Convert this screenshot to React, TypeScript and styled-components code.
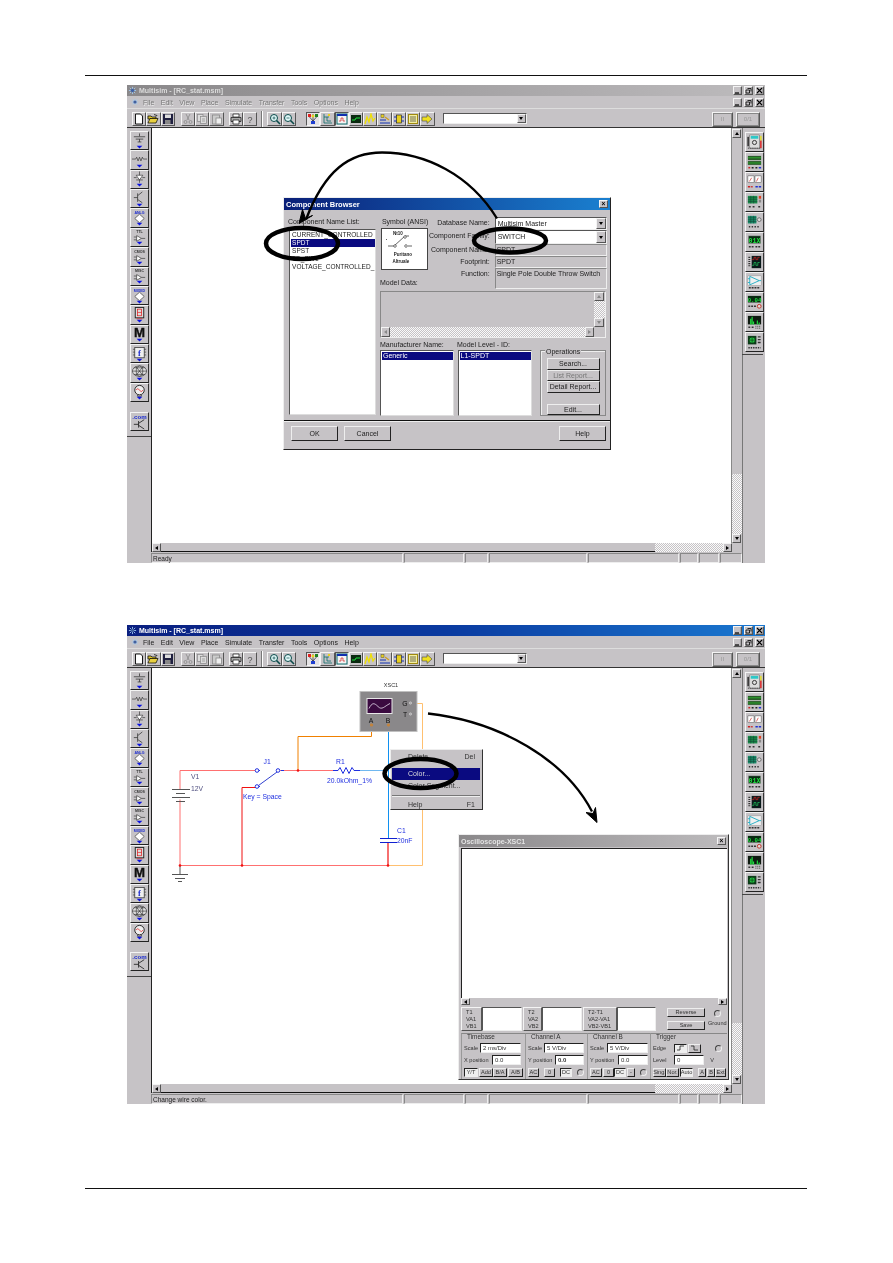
import React from 'react';
import styled, { createGlobalStyle, css } from 'styled-components';

const Global = createGlobalStyle`
  html, body { margin: 0; padding: 0; background: #fff; }
  body { font-family: 'Liberation Sans', Arial, sans-serif; }
`;

const chrome = '#c6c3c6';

const raised = css`
  background: ${chrome};
  border: 1px solid;
  border-color: #f4f4f4 #555 #555 #f4f4f4;
  box-sizing: border-box;
`;

const sunken = css`
  border: 1px solid;
  border-color: #555 #eee #eee #555;
  box-sizing: border-box;
`;

const checker = css`
  background: repeating-conic-gradient(#fafafa 0 25%, #c6c3c6 0 50%) 0 0 / 2px 2px;
`;

const Page = styled.div`
  width: 893px;
  min-height: 1263px;
  box-sizing: border-box;
  padding: 75px 86px 0 85px;
  display: flex;
  flex-direction: column;
  align-items: center;
`;

const Rule = styled.div<{ $top?: number }>`
  width: 100%;
  height: 1px;
  background: #111;
  margin-top: ${p => p.$top ?? 0}px;
`;

const Shell = styled.div<{ $top: number; $height: number }>`
  width: 638px;
  height: ${p => p.$height}px;
  margin-top: ${p => p.$top}px;
  background: ${chrome};
  display: flex;
  flex-direction: column;
  filter: blur(0.45px);
  overflow: hidden;
  flex: none;
`;

const TitleBar = styled.div<{ $active: boolean }>`
  height: 11px;
  flex: none;
  display: flex;
  align-items: center;
  gap: 2px;
  padding: 0 1px;
  background: ${p =>
    p.$active ? 'linear-gradient(90deg, #0a1f80 0%, #0a3aa0 50%, #1a78d0 100%)' : 'linear-gradient(90deg, #8a888a, #bdbbbd)'};
`;

const TitleText = styled.span<{ $active: boolean }>`
  font-size: 7px;
  font-weight: 700;
  color: ${p => (p.$active ? '#fff' : '#dcdcdc')};
  flex: 1;
  white-space: nowrap;
`;

const WinButtons = styled.div`
  display: flex;
  gap: 2px;
  margin-right: 0;
`;

const WinButton = styled.div`
  ${raised}
  width: 9px;
  height: 9px;
  font-size: 7px;
  line-height: 7px;
  text-align: center;
  font-weight: 700;
  color: #000;
  box-shadow: inset -0.5px -0.5px 0 #888;
  display: flex;
  align-items: center;
  justify-content: center;
  svg { display: block; }
`;

const MenuBar = styled.div`
  height: 12px;
  flex: none;
  display: flex;
  align-items: center;
  padding: 0 1px 0 4px;
`;

const MenuItems = styled.div`
  display: flex;
  gap: 6.5px;
  margin-left: 4px;
  flex: 1;
`;

const MenuLabel = styled.span<{ $active: boolean }>`
  font-size: 7px;
  color: ${p => (p.$active ? '#222' : '#777')};
  text-shadow: ${p => (p.$active ? 'none' : '0.5px 0.5px 0 #eee')};
`;

const Toolbar = styled.div`
  height: 20px;
  flex: none;
  box-sizing: border-box;
  display: flex;
  align-items: flex-start;
  padding: 3px 5px 0;
  border-top: 1px solid #ddd;
  border-bottom: 1px solid #333;
`;

const ToolGroup = styled.div<{ $ml?: number }>`
  display: flex;
  margin-left: ${p => p.$ml ?? 0}px;
`;

const ToolButton = styled.div<{ $pressed?: boolean }>`
  ${raised}
  width: 14.3px;
  height: 14px;
  display: flex;
  align-items: center;
  justify-content: center;
  ${p => p.$pressed && css`border-color: #555 #f4f4f4 #f4f4f4 #555; background: #e4e2e4;`}
  svg { display: block; }
`;

const ToolDivider = styled.div`
  width: 1px;
  height: 16px;
  margin: -1px 0 0 4px;
  background: #777;
  border-right: 1px solid #fff;
`;

const Combo = styled.div`
  ${sunken}
  width: 84px;
  height: 11px;
  margin: 1px 0 0 8px;
  background: #fff;
  display: flex;
  justify-content: flex-end;
`;

const DropArrow = styled.div<{ $size?: number }>`
  ${raised}
  width: ${p => p.$size ?? 9}px;
  height: 100%;
  flex: none;
  display: flex;
  align-items: center;
  justify-content: center;
  &::after {
    content: '';
    border: 2px solid transparent;
    border-top: 3px solid #000;
    border-bottom: 0;
  }
`;

const RunButtons = styled.div`
  display: flex;
  gap: 3px;
  margin-left: auto;
  margin-right: 0;
`;

const RunButton = styled.div<{ $w: number }>`
  ${raised}
  width: ${p => p.$w}px;
  height: 15px;
  outline: 1px solid #888;
  outline-offset: -2px;
  font-size: 6px;
  color: #999;
  text-align: center;
  line-height: 12px;
`;

const Body = styled.div`
  flex: 1;
  min-height: 0;
  display: flex;
`;

const LeftDock = styled.div`
  width: 24px;
  flex: none;
  display: flex;
  flex-direction: column;
  box-sizing: border-box;
  padding: 3px 0 0 3px;
`;

const RightDock = styled.div`
  width: 23px;
  flex: none;
  box-sizing: border-box;
  padding: 4px 2px 0 2px;
  border-left: 1px solid #777;
`;

const DockStack = styled.div<{ $pitch: number }>`
  display: grid;
  grid-auto-rows: ${p => p.$pitch}px;
`;

const DockButton = styled.div`
  ${raised}
  width: 19px;
  border-bottom-color: #222;
  border-right-color: #333;
  display: flex;
  align-items: center;
  justify-content: center;
  svg { display: block; }
`;

const ComBlock = styled.div`
  margin-top: 10px;
  padding-bottom: 3px;
  height: 19px;
  display: flex;
`;

const DockFoot = styled.div`
  margin: 2px 0 0 -3px;
  border-top: 1px solid #444;
`;

const Center = styled.div`
  flex: 1;
  min-width: 0;
  display: flex;
  flex-direction: column;
`;

const WorkRow = styled.div`
  flex: 1;
  min-height: 0;
  display: flex;
`;

const Canvas = styled.div`
  position: relative;
  flex: 1;
  background: #fff;
  border-left: 1px solid #222;
  overflow: hidden;
`;

const CanvasSvg = styled.svg`
  position: absolute;
  inset: 0;
  width: 100%;
  height: 100%;
  display: block;
`;

const VScroll = styled.div`
  width: 11px;
  flex: none;
  display: flex;
  flex-direction: column;
  background: ${chrome};
  border-left: 1px solid #888;
  box-sizing: border-box;
  padding-top: 1px;
`;

const VThumb = styled.div`
  flex: 1;
`;

const VTrack = styled.div<{ $h: number }>`
  ${checker}
  height: ${p => p.$h}px;
`;

const Arrow = styled.div<{ $dir: 'up' | 'down' | 'left' | 'right'; $w?: number; $h?: number; $dim?: boolean }>`
  ${raised}
  width: ${p => p.$w ?? 9}px;
  height: ${p => p.$h ?? 9}px;
  flex: none;
  display: flex;
  align-items: center;
  justify-content: center;
  &::after {
    content: '';
    width: 0;
    height: 0;
    border-style: solid;
    border-color: transparent;
    ${p => p.$dir === 'up' && css`border-width: 0 2.5px 3px; border-bottom-color: ${p.$dim ? '#888' : '#000'};`}
    ${p => p.$dir === 'down' && css`border-width: 3px 2.5px 0; border-top-color: ${p.$dim ? '#888' : '#000'};`}
    ${p => p.$dir === 'left' && css`border-width: 2.5px 3px 2.5px 0; border-right-color: ${p.$dim ? '#888' : '#000'};`}
    ${p => p.$dir === 'right' && css`border-width: 2.5px 0 2.5px 3px; border-left-color: ${p.$dim ? '#888' : '#000'};`}
  }
`;

const HScroll = styled.div`
  height: 9px;
  flex: none;
  display: flex;
  border-left: 1px solid #222;
  box-shadow: none;
`;

const HScrollInner = styled.div`
  flex: 1;
  display: flex;
  margin-right: 10px;
`;

const HThumb = styled.div`
  flex: 1;
  background: ${chrome};
  border-bottom: 1px solid #111;
`;

const HTrack = styled.div`
  ${checker}
  width: 68px;
  flex: none;
`;

const StatusBar = styled.div`
  height: 11px;
  flex: none;
  display: flex;
  padding-top: 1px;
  box-sizing: border-box;
`;

const StatusCell = styled.div<{ $w: number; $grow?: boolean }>`
  ${sunken}
  border-color: #888 #eee #eee #888;
  width: ${p => p.$w}px;
  margin-left: ${p => (p.$grow ? 0 : 1)}px;
  font-size: 6.5px;
  line-height: 9px;
  padding-left: 1px;
  color: #222;
  white-space: nowrap;
`;

/* ----- Component Browser dialog ----- */

const Dialog = styled.div`
  ${raised}
  position: absolute;
  left: 131px;
  top: 69px;
  width: 328px;
  height: 253px;
  border-color: #eee #222 #222 #eee;
  display: flex;
  flex-direction: column;
  font-size: 7px;
  color: #222;
`;

const DialogTitle = styled.div`
  height: 12px;
  flex: none;
  display: flex;
  align-items: center;
  justify-content: space-between;
  padding: 0 2px;
  margin-bottom: 7px;
  background: linear-gradient(90deg, #0a1f78, #1a80d0);
  color: #fff;
  font-weight: 700;
  font-size: 7.5px;
`;

const CloseBox = styled.div`
  ${raised}
  width: 9px;
  height: 8px;
  color: #000;
  font-size: 6.5px;
  line-height: 6px;
  text-align: center;
  font-weight: 700;
`;

const DialogMain = styled.div`
  display: flex;
  padding: 0 4px 0 4px;
  height: 198px;
`;

const NameColumn = styled.div`
  width: 92px;
  flex: none;
  display: flex;
  flex-direction: column;
`;

const FieldLabel = styled.div`
  height: 12px;
  line-height: 10px;
  white-space: nowrap;
`;

const ListBox = styled.div<{ $w?: number; $h?: number }>`
  ${sunken}
  background: #fff;
  border-color: #555 #ddd #ddd #555;
  width: ${p => (p.$w ? `${p.$w}px` : 'auto')};
  height: ${p => (p.$h ? `${p.$h}px` : 'auto')};
  overflow: hidden;
  flex: none;
  padding: 1px 0 0 1px;
`;

const NameList = styled(ListBox)`
  width: 87px;
  margin-left: 1px;
  height: 186px;
  font-size: 6.5px;
  letter-spacing: 0.05px;
`;

const ListRow = styled.div<{ $selected?: boolean; $size?: number }>`
  height: 8px;
  line-height: 8px;
  white-space: nowrap;
  padding-left: 1px;
  background: ${p => (p.$selected ? '#0a0a80' : 'transparent')};
  color: ${p => (p.$selected ? '#fff' : '#222')};
`;

const RightColumn = styled.div`
  flex: 1;
  min-width: 0;
  display: flex;
  flex-direction: column;
`;

const TopRow = styled.div`
  display: flex;
  height: 73px;
  flex: none;
`;

const SymbolColumn = styled.div`
  width: 49px;
  flex: none;
  display: flex;
  flex-direction: column;
`;

const SymbolBox = styled.div`
  width: 47px;
  height: 42px;
  margin: -1px 0 0 1px;
  background: #fff;
  border: 1px solid #444;
  box-sizing: border-box;
  svg { display: block; }
`;

const ModelDataLabel = styled(FieldLabel)`
  margin-top: 8px;
`;

const FieldGrid = styled.div`
  flex: 1;
  display: grid;
  grid-template-columns: 1fr 112px;
  grid-template-rows: 13px 14px 12px 12px 21px;
  column-gap: 5px;
`;

const RowLabel = styled.div`
  text-align: right;
  padding-top: 2px;
  white-space: nowrap;
  overflow: visible;
`;

const ComboField = styled.div`
  ${sunken}
  background: #fff;
  display: flex;
  justify-content: space-between;
  padding-left: 2px;
  line-height: 11px;
  color: #222;
`;

const ReadField = styled.div`
  border: 1px solid #888;
  border-right-color: #eee;
  border-bottom-color: #eee;
  box-sizing: border-box;
  padding-left: 1px;
  line-height: 10px;
`;

const ModelBox = styled.div`
  ${sunken}
  height: 47px;
  margin-top: 1px;
  display: grid;
  grid-template-columns: 1fr 11px;
  grid-template-rows: 1fr 10px;
  flex: none;
  border-color: #888 #eee #eee #888;
`;

const ModelVScroll = styled.div`
  display: flex;
  flex-direction: column;
`;

const ModelTrack = styled.div`
  ${checker}
  flex: 1;
`;

const ModelPad = styled.div`
  flex: none;
  height: 10px;
  background: ${chrome};
`;

const ModelHScroll = styled.div`
  display: flex;
  grid-column: 1;
`;

const LowerLabels = styled.div`
  display: flex;
  height: 11px;
  margin-top: 1px;
  flex: none;
`;

const LowerLabel = styled.div<{ $w: number }>`
  width: ${p => p.$w}px;
  line-height: 11px;
`;

const LowerRow = styled.div`
  display: flex;
  height: 66px;
  gap: 3.5px;
  flex: none;
`;

const Selected = styled(ListRow)`
  height: 8px;
  font-size: 7px;
`;

const Operations = styled.div`
  flex: 1;
  position: relative;
  margin: 0 0 0 5px;
  border: 1px solid #888;
  box-shadow: inset 1px 1px 0 #eee;
  display: flex;
  flex-direction: column;
  align-items: center;
  padding-top: 7px;
`;

const Legend = styled.span`
  position: absolute;
  left: 4px;
  top: -3px;
  padding: 0 1px;
  background: ${chrome};
  line-height: 8px;
`;

const PushButton = styled.div<{ $w?: number; $h?: number; $dim?: boolean; $after?: number }>`
  ${raised}
  width: ${p => p.$w ?? 53}px;
  height: ${p => p.$h ?? 11.5}px;
  margin-bottom: ${p => p.$after ?? 0}px;
  flex: none;
  border-color: #eee #222 #222 #eee;
  text-align: center;
  line-height: ${p => (p.$h ?? 11.5) - 2}px;
  color: ${p => (p.$dim ? '#777' : '#222')};
  white-space: nowrap;
`;

const DialogFooter = styled.div`
  flex: 1;
  display: flex;
  align-items: flex-start;
  margin-top: 5px;
  border-top: 1px solid #111;
  box-shadow: inset 0 1px 0 #eee;
  padding: 5px 4px 0 7px;
  gap: 6px;
`;

const FooterSpacer = styled.div`
  flex: 1;
`;

/* ----- context menu ----- */

const ContextMenu = styled.div`
  ${raised}
  position: absolute;
  left: 238px;
  top: 81px;
  width: 93px;
  height: 61px;
  padding: 1px 2px 0 1px;
  border-color: #eee #333 #333 #eee;
  font-size: 7px;
  color: #333;
`;

const ContextItem = styled.div<{ $selected?: boolean; $after?: number }>`
  height: 12px;
  line-height: 12px;
  display: flex;
  justify-content: space-between;
  padding: 0 5px 0 16px;
  margin-bottom: ${p => p.$after ?? 0}px;
  background: ${p => (p.$selected ? '#0a0a80' : 'transparent')};
  color: ${p => (p.$selected ? '#ddd' : '#333')};
`;

const ContextRule = styled.div`
  height: 1px;
  margin: 3px 0 2px;
  background: #777;
  border-bottom: 1px solid #eee;
`;

/* ----- oscilloscope panel ----- */

const ScopeWindow = styled.div`
  ${raised}
  position: absolute;
  left: 306px;
  top: 166px;
  width: 271px;
  height: 246px;
  display: flex;
  flex-direction: column;
  border-color: #eee #333 #333 #eee;
  font-size: 5.6px;
  color: #333;
`;

const ScopeTitle = styled.div`
  height: 12px;
  flex: none;
  display: flex;
  align-items: center;
  justify-content: space-between;
  padding: 0 2px;
  background: linear-gradient(90deg, #8a888a, #bdbbbd);
  color: #e4e4e4;
  font-weight: 700;
  font-size: 7px;
`;

const ScopeScreen = styled.div`
  height: 149px;
  margin: 1px 1px 0 2px;
  background: #fff;
  border-top: 1px solid #222;
  border-left: 1px solid #222;
  flex: none;
`;

const ScopeHScroll = styled.div`
  display: flex;
  height: 7px;
  margin: 0 1px 0 2px;
  flex: none;
`;

const ScopeThumb = styled.div`
  flex: 1;
`;

const ReadoutRow = styled.div`
  display: flex;
  height: 24px;
  margin: 2px 0 0 2px;
  flex: none;
`;

const ReadoutLabel = styled.div<{ $w: number }>`
  ${raised}
  width: ${p => p.$w}px;
  padding-left: 4px;
  line-height: 7px;
  padding-top: 1px;
  flex: none;
  white-space: nowrap;
`;

const ReadoutValue = styled.div<{ $w: number }>`
  ${sunken}
  width: ${p => p.$w}px;
  margin-right: 1px;
  background: #fff;
  flex: none;
`;

const ActionColumn = styled.div`
  display: flex;
  flex-direction: column;
  gap: 4px;
  margin: 1px 0 0 10px;
`;

const GroundColumn = styled.div`
  margin-left: 3px;
  display: flex;
  flex-direction: column;
  align-items: center;
  gap: 3px;
  padding-top: 3px;
`;

const Radio = styled.div<{ $ml?: number }>`
  width: 7px;
  height: 7px;
  border-radius: 50%;
  border: 1px solid;
  border-color: #444 #eee #eee #444;
  box-sizing: border-box;
  flex: none;
  margin-left: ${p => p.$ml ?? 0}px;
`;

const ControlsRow = styled.div`
  display: flex;
  flex: 1;
  margin: 2px 0 0 2px;
`;

const ControlGroup = styled.div<{ $w: number }>`
  width: ${p => p.$w}px;
  flex: none;
  position: relative;
  box-sizing: border-box;
  border-top: 1px solid #888;
  border-left: 1px solid #999;
  padding: 9px 2px 0 2px;
  display: flex;
  flex-direction: column;
  gap: 2px;
`;

const GroupTitle = styled.span`
  position: absolute;
  top: -1px;
  left: 5px;
  font-size: 6.4px;
  line-height: 8px;
`;

const ControlRow = styled.div`
  display: flex;
  align-items: center;
  height: 10px;
  white-space: nowrap;
`;

const ControlLabel = styled.span<{ $w: number; $center?: boolean }>`
  width: ${p => p.$w}px;
  flex: none;
  text-align: ${p => (p.$center ? 'center' : 'left')};
`;

const Input = styled.div<{ $w: number; $ml?: number; $plain?: boolean }>`
  ${sunken}
  border-color: #222 #eee #eee #222;
  width: ${p => p.$w}px;
  margin-left: ${p => p.$ml ?? 0}px;
  height: 10px;
  line-height: 8px;
  padding-left: 2px;
  background: #fff;
  flex: none;
  font-size: 6px;
`;

const MiniButton = styled.div<{ $w: number; $ml?: number; $on?: boolean }>`
  ${raised}
  border-color: #eee #222 #222 #eee;
  width: ${p => p.$w}px;
  margin-left: ${p => p.$ml ?? 0}px;
  height: 9px;
  flex: none;
  text-align: center;
  line-height: 7px;
  display: flex;
  align-items: center;
  justify-content: center;
  ${p => p.$on && css`background: #eeeeee; border-color: #222 #eee #eee #222;`}
`;

/* ----- small drawings ----- */

const Tri = () => <polygon points="6,14 12,14 9,17" fill="#0a10e0" />;

const gate = <path d="M6 7.5v6l5-3zM3 9h3M3 12h3M11 10.5h4" fill="#fff" stroke="#333" strokeWidth=".7" />;

const Label = ({ t, c = '#333' }: { t: string; c?: string }) => (
  <text x="9" y="4.4" fontSize="3.8" fontWeight="700" textAnchor="middle" fill={c} fontFamily="Liberation Sans">
    {t}
  </text>
);

const leftIcons: React.ReactNode[] = [
  <g key="g" stroke="#333" fill="none" strokeWidth=".8"><path d="M9 1v3M3 4.500h12M5 7h8M9 7v3M7 10h4" /><g stroke="none"><Tri /></g></g>,
  <g key="r" stroke="#333" fill="none" strokeWidth=".7"><path d="M1 8h4l1-2 1.500 4L9 6l1.500 4L12 6l1 2h4" /><g stroke="none"><Tri /></g></g>,
  <g key="d" stroke="#333" fill="#fff" strokeWidth=".7"><path d="M9 1v4M5.500 5h7L9 10zM5.500 10h7M9 10v3M3 7.500h3M12 7.500h3" /><g stroke="none"><Tri /></g></g>,
  <g key="t" stroke="#333" fill="none" strokeWidth=".8"><path d="M7 3v9M3 7.500h4M7 5.500l5-4M7 9.500l5 3.500" /><g stroke="none"><Tri /></g></g>,
  <g key="a"><Label t="ANLG" c="#1a2ad0" /><path d="M9 5l5 4.500-5 4.500-5-4.500z" fill="#fff" stroke="#333" strokeWidth=".7" /><Tri /></g>,
  <g key="ttl"><Label t="TTL" />{gate}<Tri /></g>,
  <g key="cmos"><Label t="CMOS" />{gate}<Tri /></g>,
  <g key="misc"><Label t="MISC" />{gate}<Tri /></g>,
  <g key="mix"><Label t="MIXED" c="#1a2ad0" /><path d="M9 5l5 4.500-5 4.500-5-4.500z" fill="#fff" stroke="#333" strokeWidth=".7" /><Tri /></g>,
  <g key="ind"><rect x="4.500" y="1" width="9" height="11" fill="#ddd" stroke="#222" /><rect x="6.800" y="2.800" width="4.400" height="7" fill="none" stroke="#e02020" strokeWidth=".8" /><path d="M6.800 6.300h4.400M6 13h6" stroke="#e02020" strokeWidth=".7" /><Tri /></g>,
  <g key="m"><text x="9" y="12.500" fontSize="14" fontWeight="900" textAnchor="middle" fill="#111" stroke="#111" strokeWidth=".4" fontFamily="Liberation Sans">M</text><Tri /></g>,
  <g key="f"><rect x="4" y="2" width="10" height="11" fill="#eee" stroke="#333" strokeWidth=".8" /><path d="M2 4h2M2 7h2M2 10h2M14 4h2M14 7h2M14 10h2" stroke="#333" strokeWidth=".7" /><text x="9" y="11" fontSize="9" fontWeight="700" textAnchor="middle" fill="#1a2ad0" fontFamily="Liberation Serif">f</text><Tri /></g>,
  <g key="rf" fill="none" stroke="#222" strokeWidth=".6"><ellipse cx="9" cy="7" rx="7.500" ry="5.500" fill="#ddd" /><ellipse cx="9" cy="7" rx="3.500" ry="5.500" /><path d="M1.500 7h15M3 3.500h12M3 10.500h12M5 2l8 10M13 2L5 12" /><g stroke="none"><Tri /></g></g>,
  <g key="wave" fill="none"><circle cx="9" cy="7" r="5" fill="#eee" stroke="#222" /><path d="M5.500 7c1-2 2-2 3.500 0s2.500 2 3.500 0" stroke="#e02020" strokeWidth=".8" /><path d="M7 12v1.500h4V12" stroke="#222" strokeWidth=".7" /><g stroke="none"><Tri /></g></g>,
];

const rightIcons: React.ReactNode[] = [
  <g key="0"><rect x="4" y="1" width="10" height="14" fill="#ddd" stroke="#555" strokeWidth=".5" /><rect x="5" y="2" width="8" height="3" fill="#2cc8c8" /><circle cx="9" cy="9" r="2.200" fill="none" stroke="#333" /><rect x="1.500" y="3" width="1.500" height="10" fill="#222" /><rect x="15" y="2" width="1.500" height="5" fill="#e8e020" /><rect x="15" y="7" width="1.500" height="8" fill="#e02020" /><path d="M2 15h14" stroke="#222" strokeDasharray="1 1" /></g>,
  <g key="1"><rect x="2" y="2" width="14" height="4.500" fill="#2a5a2a" /><rect x="2" y="7.500" width="14" height="4" fill="#2a5a2a" /><path d="M2 4h14M2 9.500h14" stroke="#30e030" strokeWidth=".6" /><path d="M2.500 14.500h2" stroke="#d02020" strokeWidth="1.600" /><path d="M6 14.500h2M10 14.500h2" stroke="#222" strokeWidth="1.600" /><path d="M13.500 14.500h2.500" stroke="#2030d0" strokeWidth="1.600" /></g>,
  <g key="2"><rect x="2" y="2" width="6.500" height="7" fill="#fff" stroke="#444" strokeWidth=".5" /><rect x="9.500" y="2" width="6.500" height="7" fill="#fff" stroke="#444" strokeWidth=".5" /><path d="M3.500 8L6 4M11 8l2-4" stroke="#d02020" strokeWidth=".7" /><path d="M2 13.500h2.500M5.500 13.500H7" stroke="#d02020" strokeWidth="1.600" /><path d="M10 13.500h2.500M13.500 13.500H16" stroke="#2030d0" strokeWidth="1.600" /></g>,
  <g key="3"><rect x="2" y="2" width="10" height="8" fill="#1a8a4a" /><path d="M2 4h10M2 6h10M2 8h10M5 2v8M8 2v8" stroke="#104030" strokeWidth=".5" /><rect x="13.500" y="2" width="2.500" height="3" fill="#e04020" /><rect x="13.500" y="6" width="2.500" height="3" fill="#888" /><path d="M3 13.500h2M7 13.500h2M13 13.500h2" stroke="#333" strokeWidth="1.600" /></g>,
  <g key="4"><rect x="2" y="2" width="9" height="8" fill="#1a8a6a" /><path d="M2 4h9M2 6h9M2 8h9M5 2v8M8 2v8" stroke="#104030" strokeWidth=".5" /><circle cx="14" cy="6" r="2" fill="#ddd" stroke="#333" strokeWidth=".6" /><path d="M3 13.500h1.500M6 13.500h1.500M9 13.500h1.500M12 13.500h1.500" stroke="#333" strokeWidth="1.600" /></g>,
  <g key="5"><rect x="2.500" y="2" width="13" height="8" fill="#082a10" stroke="#999" strokeWidth=".5" /><text x="9" y="9" fontSize="7" fontWeight="700" textAnchor="middle" fill="#20e040" fontFamily="Liberation Mono">01X</text><path d="M3 13.500h2M6 13.500h2M10 13.500h2M13 13.500h2" stroke="#333" strokeWidth="1.600" /></g>,
  <g key="6"><rect x="6" y="2" width="10" height="13" fill="#0a1a1a" /><path d="M6.500 6h2V3.500h2V6h2V3.500h2" stroke="#e02020" fill="none" strokeWidth=".7" /><path d="M6.500 12h2V9h2v3h2V9h2" stroke="#20d060" fill="none" strokeWidth=".7" /><path d="M3.500 3v11" stroke="#333" strokeWidth="2" strokeDasharray="1.200 1" /></g>,
  <g key="7"><rect x="2" y="2" width="14" height="10" fill="#f0f0f0" stroke="#888" strokeWidth=".4" /><path d="M4 2.500v9L14 7zM2 5h2M2 9h2M14 7h2" fill="none" stroke="#10a8c0" strokeWidth=".9" /><path d="M3 14.500h2M6 14.500h2M9 14.500h2M12 14.500h2" stroke="#333" strokeWidth="1.500" /></g>,
  <g key="8"><rect x="2" y="2" width="14" height="7" fill="#082a10" /><text x="9" y="8" fontSize="6" fontWeight="700" textAnchor="middle" fill="#20e040" fontFamily="Liberation Mono">0.04</text><path d="M2.500 13h2M5.500 13h2M8.500 13h2" stroke="#333" strokeWidth="1.400" /><circle cx="14" cy="13" r="2" fill="#ddd" stroke="#c03020" /></g>,
  <g key="9"><rect x="2" y="2" width="14" height="9" fill="#0e1a10" /><path d="M5 11V5M6.500 11V3M8 11V8M12 11V7M14 11V9" stroke="#20e040" strokeWidth="1.200" /><path d="M2.500 14h2M6 14h2" stroke="#333" strokeWidth="1.500" /><path d="M10 13h6M10 15h6" stroke="#333" strokeDasharray="1 1" /></g>,
  <g key="10"><rect x="2" y="2" width="9" height="9" fill="#0e3a1a" /><circle cx="6.500" cy="6.500" r="3.500" fill="#20c040" stroke="#0a2a10" /><path d="M3 6.500h7M6.500 3v7" stroke="#0a2a10" strokeWidth=".6" /><path d="M12.500 3h3M12.500 6h3M12.500 9h3" stroke="#333" strokeWidth="1.400" /><path d="M2.500 14.500h13" stroke="#333" strokeWidth="1.500" strokeDasharray="1.500 1" /></g>,
];

const TI = ({ children }: { children: React.ReactNode }) => (
  <svg width="12" height="12" viewBox="0 0 12 12">{children}</svg>
);

const toolIcons: Record<string, React.ReactNode> = {
  new: <path d="M2.500 1h5l2 2v8h-7z" fill="#fff" stroke="#000" strokeWidth=".9" />,
  open: <g stroke="#000" strokeWidth=".7"><path d="M1 3h3l1 1h4v2H1z" fill="#d8c030" /><path d="M1 10l2-4.500h8L9 10z" fill="#e8d040" /><path d="M7 1.500l3 1-1 1" fill="none" /></g>,
  save: <g><rect x="1" y="1" width="10" height="10" fill="#202040" /><rect x="3" y="1.500" width="6" height="3.500" fill="#ddd" /><rect x="3" y="7" width="5.500" height="4" fill="#888" /></g>,
  cut: <g stroke="#888" strokeWidth=".8" fill="none"><path d="M4 1l3 6M8 1L5 7" /><circle cx="3.500" cy="9" r="1.500" /><circle cx="8.500" cy="9" r="1.500" /></g>,
  copy: <g stroke="#888" strokeWidth=".7" fill="#ddd"><rect x="1.500" y="1.500" width="5.500" height="7" /><rect x="4.500" y="3.500" width="6" height="7" /><path d="M6 6h3M6 8h3" /></g>,
  paste: <g stroke="#888" strokeWidth=".8" fill="#ccc"><rect x="1.500" y="2" width="7" height="9" /><rect x="5" y="5" width="5.500" height="6" fill="#eee" /></g>,
  print: <g stroke="#111" strokeWidth=".7"><path d="M3 1h6v3H3z" fill="#fff" /><path d="M1 4.500h10v4H1z" fill="#aaa" /><path d="M3 7h6v4H3z" fill="#fff" /></g>,
  help: <text x="6" y="9.500" fontSize="9" textAnchor="middle" fill="#555" fontFamily="Liberation Sans">?</text>,
  zoomIn: <g fill="none" stroke="#0a4a4a" strokeWidth="1"><circle cx="5" cy="5" r="3.500" fill="#e0f8f8" /><path d="M7.500 7.500l3.500 3.500" strokeWidth="1.600" /><path d="M3.500 5h3M5 3.500v3" strokeWidth=".7" /></g>,
  zoomOut: <g fill="none" stroke="#0a4a4a" strokeWidth="1"><circle cx="5" cy="5" r="3.500" fill="#e0f8f8" /><path d="M7.500 7.500l3.500 3.500" strokeWidth="1.600" /><path d="M3.500 5h3" strokeWidth=".7" /></g>,
  tree: <g><rect x="1" y="1" width="3" height="3" fill="#e02020" /><rect x="8" y="1" width="3" height="3" fill="#208020" /><rect x="4" y="8" width="4" height="3" fill="#2040d0" /><path d="M2.500 4l3.500 4 3.500-4M6 1v7" stroke="#222" strokeWidth=".7" fill="none" /><circle cx="6" cy="3" r="1.500" fill="#e8d020" /></g>,
  tree2: <g stroke="#0a6a6a" strokeWidth=".8" fill="none"><path d="M3 1v9h8M3 4h5M6 4v4h4" /><rect x="7" y="1" width="2" height="2" fill="#e8d020" stroke="none" /></g>,
  grapher: <g><rect x="1" y="1" width="10" height="10" fill="#f4f4f4" stroke="#0a6a6a" /><rect x="1" y="1" width="10" height="2" fill="#1030b0" /><path d="M3 8h2V5h2v3h2" stroke="#d02020" strokeWidth=".7" fill="none" /></g>,
  postproc: <g><rect x="1" y="2" width="10" height="8" fill="#0a2a10" /><path d="M2 7h3l1-2h4" stroke="#20e040" fill="none" /></g>,
  spice: <path d="M1 11l2-7 2 5 2-8 2 7 2-3" stroke="#f0e000" strokeWidth="1.300" fill="none" />,
  bars: <g><path d="M1 10h10M1 7h6" stroke="#1030b0" strokeWidth="1" /><rect x="2" y="1.500" width="3" height="3" fill="#e8d020" stroke="#333" strokeWidth=".4" /><path d="M6 4l4 3" stroke="#d0a020" strokeWidth="1.200" /></g>,
  chip: <g><rect x="3.500" y="2" width="5" height="8" fill="#e8d020" stroke="#111" strokeWidth=".6" /><path d="M1 4h2.500M1 8h2.500M8.500 4H11M8.500 8H11" stroke="#1030b0" strokeWidth="1" /></g>,
  list: <g><rect x="1.500" y="1.500" width="9" height="9" fill="#f4f0a0" stroke="#a08a10" /><path d="M3 4h6M3 6h6M3 8h6" stroke="#333" strokeWidth=".7" /></g>,
  arrow: <path d="M1 4h5V1.500L11 6l-5 4.500V8H1z" fill="#f0e020" stroke="#444" strokeWidth=".6" />,
};

const toolGroups: { ml: number; items: { k: string; pressed?: boolean }[] }[] = [
  { ml: 0, items: [{ k: 'new' }, { k: 'open' }, { k: 'save' }] },
  { ml: 6, items: [{ k: 'cut' }, { k: 'copy' }, { k: 'paste' }] },
  { ml: 5, items: [{ k: 'print' }, { k: 'help' }] },
];

const designTools = [
  { k: 'tree', pressed: true },
  { k: 'tree2' },
  { k: 'grapher', pressed: true },
  { k: 'postproc' },
  { k: 'spice' },
  { k: 'bars' },
  { k: 'chip' },
  { k: 'list' },
  { k: 'arrow' },
];

const menus = ['File', 'Edit', 'View', 'Place', 'Simulate', 'Transfer', 'Tools', 'Options', 'Help'];
const statusWidths = [253, 60, 23, 99, 91, 18, 20, 22];

const AppIcon = ({ size }: { size: number }) => (
  <svg width={size} height={size} viewBox="0 0 10 10">
    <path d="M1 5h8M5 1v8M2 2l6 6M8 2L2 8" stroke="#a0c8f0" strokeWidth="1" />
    <circle cx="5" cy="5" r="2" fill="#4060a0" />
  </svg>
);

const WindowControls = () => (
  <WinButtons>
    <WinButton>
      <svg width="7" height="7" viewBox="0 0 7 7"><path d="M1 6h4" stroke="#000" strokeWidth="1.200" /></svg>
    </WinButton>
    <WinButton>
      <svg width="7" height="7" viewBox="0 0 7 7"><path d="M2.500 1.500h3.500v3M1 3h3.500v3H1z" fill="none" stroke="#000" strokeWidth=".8" /></svg>
    </WinButton>
    <WinButton>
      <svg width="7" height="7" viewBox="0 0 7 7"><path d="M1 1l5 5M6 1L1 6" stroke="#000" strokeWidth="1.100" /></svg>
    </WinButton>
  </WinButtons>
);

type WindowProps = {
  active: boolean;
  status: string;
  top: number;
  height: number;
  track: number;
  children: React.ReactNode;
};

const AppWindow = ({ active, status, top, height, track, children }: WindowProps) => (
  <Shell $top={top} $height={height}>
    <TitleBar $active={active}>
      <AppIcon size={9} />
      <TitleText $active={active}>Multisim - [RC_stat.msm]</TitleText>
      <WindowControls />
    </TitleBar>
    <MenuBar>
      <AppIcon size={8} />
      <MenuItems>
        {menus.map(m => (
          <MenuLabel key={m} $active={active}>{m}</MenuLabel>
        ))}
      </MenuItems>
      <WindowControls />
    </MenuBar>
    <Toolbar>
      {toolGroups.map((g, i) => (
        <ToolGroup key={i} $ml={g.ml}>
          {g.items.map(t => (
            <ToolButton key={t.k}><TI>{toolIcons[t.k]}</TI></ToolButton>
          ))}
        </ToolGroup>
      ))}
      <ToolDivider />
      <ToolGroup $ml={4}>
        <ToolButton><TI>{toolIcons.zoomIn}</TI></ToolButton>
        <ToolButton><TI>{toolIcons.zoomOut}</TI></ToolButton>
      </ToolGroup>
      <ToolGroup $ml={10}>
        {designTools.map(t => (
          <ToolButton key={t.k} $pressed={t.pressed}><TI>{toolIcons[t.k]}</TI></ToolButton>
        ))}
      </ToolGroup>
      <Combo><DropArrow /></Combo>
      <RunButtons>
        <RunButton $w={21}>II</RunButton>
        <RunButton $w={24}>0/1</RunButton>
      </RunButtons>
    </Toolbar>
    <Body>
      <LeftDock>
        <DockStack $pitch={19.36}>
          {leftIcons.map((icon, i) => (
            <DockButton key={i}>
              <svg width="17" height="18" viewBox="0 0 18 18">{icon}</svg>
            </DockButton>
          ))}
        </DockStack>
        <ComBlock>
          <DockButton>
            <svg width="17" height="17" viewBox="0 0 18 18">
              <text x="9" y="6.500" fontSize="6.500" fontWeight="700" textAnchor="middle" fill="#1a2ad0" fontFamily="Liberation Sans">.com</text>
              <path d="M3 12h5M8 8.500v7M8 11l6-4M8 13l6 4" stroke="#222" strokeWidth=".9" fill="none" />
            </svg>
          </DockButton>
        </ComBlock>
        <DockFoot />
      </LeftDock>
      <Center>
        <WorkRow>
          <Canvas>{children}</Canvas>
          <VScroll>
            <Arrow $dir="up" />
            <VThumb />
            <VTrack $h={track} />
            <Arrow $dir="down" />
          </VScroll>
        </WorkRow>
        <HScroll>
          <HScrollInner>
            <Arrow $dir="left" />
            <HThumb />
            <HTrack />
            <Arrow $dir="right" />
          </HScrollInner>
        </HScroll>
        <StatusBar>
          {statusWidths.map((w, i) => (
            <StatusCell key={i} $w={w} $grow={i === 0}>{i === 0 ? status : ''}</StatusCell>
          ))}
        </StatusBar>
      </Center>
      <RightDock>
        <DockStack $pitch={20}>
          {rightIcons.map((icon, i) => (
            <DockButton key={i}>
              <svg width="17" height="17" viewBox="0 0 18 18">{icon}</svg>
            </DockButton>
          ))}
        </DockStack>
        <DockFoot />
      </RightDock>
    </Body>
  </Shell>
);

const ComponentBrowser = () => (
  <Dialog>
    <DialogTitle>
      Component Browser
      <CloseBox>×</CloseBox>
    </DialogTitle>
    <DialogMain>
      <NameColumn>
        <FieldLabel>Component Name List:</FieldLabel>
        <NameList>
          <ListRow>CURRENT_CONTROLLED</ListRow>
          <ListRow $selected>SPDT</ListRow>
          <ListRow>SPST</ListRow>
          <ListRow>TD_SW1</ListRow>
          <ListRow>VOLTAGE_CONTROLLED_</ListRow>
        </NameList>
      </NameColumn>
      <RightColumn>
        <TopRow>
          <SymbolColumn>
            <FieldLabel>&nbsp;Symbol (ANSI)</FieldLabel>
            <SymbolBox>
              <svg width="45" height="40" viewBox="0 0 45 40">
                <text x="16" y="6" fontSize="4.500" fontWeight="700" fill="#222" textAnchor="middle" fontFamily="Liberation Sans">Nt10</text>
                <text x="21" y="27" fontSize="4.500" fontWeight="700" fill="#222" textAnchor="middle" fontFamily="Liberation Sans">Puritano</text>
                <text x="19" y="34" fontSize="4.500" fontWeight="700" fill="#222" textAnchor="middle" fontFamily="Liberation Sans">Altruale</text>
                <path d="M4 10l1 1M6 17h6l11-10h4M26 17h4" stroke="#222" strokeWidth=".7" fill="none" />
                <circle cx="23" cy="8" r="1.300" fill="#fff" stroke="#222" strokeWidth=".6" />
                <circle cx="13" cy="17" r="1.300" fill="#fff" stroke="#222" strokeWidth=".6" />
                <circle cx="24" cy="17" r="1.300" fill="#fff" stroke="#222" strokeWidth=".6" />
              </svg>
            </SymbolBox>
            <ModelDataLabel>Model Data:</ModelDataLabel>
          </SymbolColumn>
          <FieldGrid>
            <RowLabel>Database Name:</RowLabel>
            <ComboField>Multisim Master<DropArrow $size={10} /></ComboField>
            <RowLabel>Component Family:</RowLabel>
            <ComboField>SWITCH<DropArrow $size={10} /></ComboField>
            <RowLabel>Component Name:</RowLabel>
            <ReadField>SPDT</ReadField>
            <RowLabel>Footprint:</RowLabel>
            <ReadField>SPDT</ReadField>
            <RowLabel>Function:</RowLabel>
            <ReadField>Single Pole Double Throw Switch</ReadField>
          </FieldGrid>
        </TopRow>
        <ModelBox>
          <div />
          <ModelVScroll>
            <Arrow $dir="up" $dim $w={10} />
            <ModelTrack />
            <Arrow $dir="down" $dim $w={10} />
          </ModelVScroll>
          <ModelHScroll>
            <Arrow $dir="left" $dim $h={10} />
            <ModelTrack />
            <Arrow $dir="right" $dim $h={10} />
          </ModelHScroll>
          <ModelPad />
        </ModelBox>
        <LowerLabels>
          <LowerLabel $w={77}>Manufacturer Name:</LowerLabel>
          <LowerLabel $w={80}>Model Level - ID:</LowerLabel>
        </LowerLabels>
        <LowerRow>
          <ListBox $w={74} $h={66}><Selected $selected>Generic</Selected></ListBox>
          <ListBox $w={74} $h={66}><Selected $selected>L1-SPDT</Selected></ListBox>
          <Operations>
            <Legend>Operations</Legend>
            <PushButton>Search...</PushButton>
            <PushButton $dim>List Report...</PushButton>
            <PushButton $after={11}>Detail Report...</PushButton>
            <PushButton>Edit...</PushButton>
          </Operations>
        </LowerRow>
      </RightColumn>
    </DialogMain>
    <DialogFooter>
      <PushButton $w={47} $h={15}>OK</PushButton>
      <PushButton $w={47} $h={15}>Cancel</PushButton>
      <FooterSpacer />
      <PushButton $w={47} $h={15}>Help</PushButton>
    </DialogFooter>
  </Dialog>
);

const BrowserMarks = () => (
  <CanvasSvg viewBox="152 129 579 414">
    <g fill="none" stroke="#000">
      <ellipse cx="302" cy="244" rx="36" ry="15.500" strokeWidth="4.500" />
      <ellipse cx="510" cy="241" rx="36" ry="12" strokeWidth="4.500" />
      <path d="M497 219C470 175 425 153 382 153C350 153 325 170 306 220" strokeWidth="2.300" />
      <path d="M299 224l3.500-14 3 9 7-3z" fill="#000" stroke="#000" strokeWidth="1" />
    </g>
  </CanvasSvg>
);

const wireText = { fontFamily: 'Liberation Sans', fontSize: 6.800 };

const Circuit = () => (
  <CanvasSvg viewBox="152 669 579 415">
    <g fill="none" strokeWidth="1">
      <path d="M180 771H256M180 771V790M180 800V866H388M278 771H333" stroke="#ff7070" />
      <path d="M256 788H242V866" stroke="#f01010" />
      <path d="M388 843V866" stroke="#f01010" strokeWidth="1.200" />
      <path d="M371.500 727V737H298V771" stroke="#f08000" />
      <path d="M388.500 728V839" stroke="#1090f0" />
      <path d="M360 771H388" stroke="#70b8f0" />
      <path d="M388 866H422.500V704H412" stroke="#ffc070" />
      <path d="M172 790h18M176 794h9M172 798h18M176 802h9M172 875h16M175 879h10M178 882h4M180 866v9" stroke="#555" />
      <path d="M380 839h17M380 843h17" stroke="#1020d0" />
      <path d="M333 771h5l2-3 3 6 3-6 3 6 3-6 2 3h6M260 771h-3M281 771h3M260 787h-3" stroke="#2030e0" />
      <path d="M258.500 786L277 772.500" stroke="#3040d0" />
      <circle cx="257" cy="771" r="1.800" stroke="#2030e0" fill="#fff" />
      <circle cx="278" cy="771" r="1.800" stroke="#2030e0" fill="#fff" />
      <circle cx="257" cy="787" r="1.800" stroke="#2030e0" fill="#fff" />
    </g>
    <g fill="#f01010">
      <circle cx="298" cy="771" r="1.300" />
      <circle cx="242" cy="866" r="1.300" />
      <circle cx="180" cy="866" r="1.300" />
      <circle cx="388" cy="866" r="1.300" />
    </g>
    <rect x="360" y="692" width="57" height="40" fill="#8a888a" stroke="#c0c0c0" />
    <rect x="367" y="699" width="25" height="15" fill="#3a0a40" stroke="#e8e8e8" />
    <path d="M369 709c3-6 5-6 9-2s6 0 12-3" fill="none" stroke="#e8e0f0" strokeWidth=".8" />
    <g {...wireText} fill="#111" textAnchor="middle">
      <text x="371" y="723">A</text>
      <text x="388" y="723">B</text>
      <text x="405" y="706">G</text>
      <text x="405" y="717">T</text>
    </g>
    <g fill="none" strokeWidth=".8">
      <circle cx="371.500" cy="725.500" r="1" stroke="#f08000" />
      <circle cx="388.500" cy="725.500" r="1" stroke="#f08000" />
      <circle cx="410.500" cy="703.500" r="1" stroke="#ddd" />
      <circle cx="410.500" cy="714.500" r="1" stroke="#ddd" />
    </g>
    <g {...wireText} fill="#2030e0">
      <text x="263.500" y="764">J1</text>
      <text x="336" y="764">R1</text>
      <text x="327" y="783">20.0kOhm_1%</text>
      <text x="243" y="799.500">Key = Space</text>
      <text x="397" y="833">C1</text>
      <text x="397" y="843.500">20nF</text>
    </g>
    <g {...wireText} fill="#505080">
      <text x="191" y="779">V1</text>
      <text x="191" y="791">12V</text>
    </g>
    <text x="391" y="687" fontSize="5.500" textAnchor="middle" fill="#333" fontFamily="Liberation Sans">XSC1</text>
  </CanvasSvg>
);

const ScopeMarks = () => (
  <CanvasSvg viewBox="152 669 579 415">
    <g fill="none" stroke="#000">
      <ellipse cx="420.500" cy="774" rx="36" ry="14.500" strokeWidth="4.500" />
      <path d="M428 714C500 722 565 760 592 812" strokeWidth="2.300" />
      <path d="M597 823l-11-10 7 1 2.500-6z" fill="#000" stroke="#000" strokeWidth="1" />
    </g>
  </CanvasSvg>
);

const WireMenu = () => (
  <ContextMenu>
    <ContextItem $after={5}><span>Delete</span><span>Del</span></ContextItem>
    <ContextItem $selected><span>Color...</span></ContextItem>
    <ContextItem><span>Color Segment...</span></ContextItem>
    <ContextRule />
    <ContextItem><span>Help</span><span>F1</span></ContextItem>
  </ContextMenu>
);

const readouts = [
  { lines: ['T1', 'VA1', 'VB1'], lw: 21, vw: 40 },
  { lines: ['T2', 'VA2', 'VB2'], lw: 19, vw: 40 },
  { lines: ['T2-T1', 'VA2-VA1', 'VB2-VB1'], lw: 34, vw: 39 },
];

const EdgeIcon = ({ falling }: { falling?: boolean }) => (
  <svg width="7" height="6" viewBox="0 0 7 6">
    <path d={falling ? 'M0 1h3v4h4' : 'M0 5h3V1h4'} fill="none" stroke="#222" strokeWidth=".8" />
  </svg>
);

const Oscilloscope = () => (
  <ScopeWindow>
    <ScopeTitle>
      Oscilloscope-XSC1
      <CloseBox>×</CloseBox>
    </ScopeTitle>
    <ScopeScreen />
    <ScopeHScroll>
      <Arrow $dir="left" $h={7} />
      <ScopeThumb />
      <Arrow $dir="right" $h={7} />
    </ScopeHScroll>
    <ReadoutRow>
      {readouts.map(r => (
        <React.Fragment key={r.lines[0]}>
          <ReadoutLabel $w={r.lw}>
            {r.lines.map(l => <div key={l}>{l}</div>)}
          </ReadoutLabel>
          <ReadoutValue $w={r.vw} />
        </React.Fragment>
      ))}
      <ActionColumn>
        <MiniButton $w={38}>Reverse</MiniButton>
        <MiniButton $w={38}>Save</MiniButton>
      </ActionColumn>
      <GroundColumn>
        <Radio />
        <span>Ground</span>
      </GroundColumn>
    </ReadoutRow>
    <ControlsRow>
      <ControlGroup $w={64}>
        <GroupTitle>Timebase</GroupTitle>
        <ControlRow><ControlLabel $w={16}>Scale</ControlLabel><Input $w={41}>2 ms/Div</Input></ControlRow>
        <ControlRow><ControlLabel $w={28}>X position</ControlLabel><Input $w={29}>0.0</Input></ControlRow>
        <ControlRow>
          <MiniButton $w={14} $on>Y/T</MiniButton>
          <MiniButton $w={14} $ml={1}>Add</MiniButton>
          <MiniButton $w={14} $ml={0}>B/A</MiniButton>
          <MiniButton $w={15} $ml={1}>A/B</MiniButton>
        </ControlRow>
      </ControlGroup>
      <ControlGroup $w={62}>
        <GroupTitle>Channel A</GroupTitle>
        <ControlRow><ControlLabel $w={16}>Scale</ControlLabel><Input $w={40}>5 V/Div</Input></ControlRow>
        <ControlRow><ControlLabel $w={27}>Y position</ControlLabel><Input $w={29}><b>0.0</b></Input></ControlRow>
        <ControlRow>
          <MiniButton $w={11}>AC</MiniButton>
          <MiniButton $w={11} $ml={5}>0</MiniButton>
          <MiniButton $w={12} $ml={5} $on>DC</MiniButton>
          <Radio $ml={5} />
        </ControlRow>
      </ControlGroup>
      <ControlGroup $w={63}>
        <GroupTitle>Channel B</GroupTitle>
        <ControlRow><ControlLabel $w={17}>Scale</ControlLabel><Input $w={41}>5 V/Div</Input></ControlRow>
        <ControlRow><ControlLabel $w={28}>Y position</ControlLabel><Input $w={30}>0.0</Input></ControlRow>
        <ControlRow>
          <MiniButton $w={12}>AC</MiniButton>
          <MiniButton $w={11} $ml={1}>0</MiniButton>
          <MiniButton $w={12} $on>DC</MiniButton>
          <MiniButton $w={8} $ml={1}>-</MiniButton>
          <Radio $ml={5} />
        </ControlRow>
      </ControlGroup>
      <ControlGroup $w={77}>
        <GroupTitle>Trigger</GroupTitle>
        <ControlRow>
          <ControlLabel $w={21}>Edge</ControlLabel>
          <MiniButton $w={13} $on><EdgeIcon /></MiniButton>
          <MiniButton $w={13} $ml={1}><EdgeIcon falling /></MiniButton>
          <Radio $ml={14} />
        </ControlRow>
        <ControlRow>
          <ControlLabel $w={21}>Level</ControlLabel>
          <Input $w={30}>0</Input>
          <ControlLabel $w={16} $center>V</ControlLabel>
        </ControlRow>
        <ControlRow>
          <MiniButton $w={13}>Sing.</MiniButton>
          <MiniButton $w={13}>Nor.</MiniButton>
          <MiniButton $w={13} $ml={1} $on>Auto</MiniButton>
          <MiniButton $w={8} $ml={5}>A</MiniButton>
          <MiniButton $w={8} $ml={1}>B</MiniButton>
          <MiniButton $w={11}>Ext</MiniButton>
        </ControlRow>
      </ControlGroup>
    </ControlsRow>
  </ScopeWindow>
);

const App: React.FC = () => (
  <>
    <Global />
    <Page>
      <Rule />
      <AppWindow active={false} status="Ready" top={9} height={478} track={60}>
        <ComponentBrowser />
        <BrowserMarks />
      </AppWindow>
      <AppWindow active status="Change wire color." top={62} height={479} track={52}>
        <Circuit />
        <WireMenu />
        <Oscilloscope />
        <ScopeMarks />
      </AppWindow>
      <Rule $top={84} />
    </Page>
  </>
);

export default App;
